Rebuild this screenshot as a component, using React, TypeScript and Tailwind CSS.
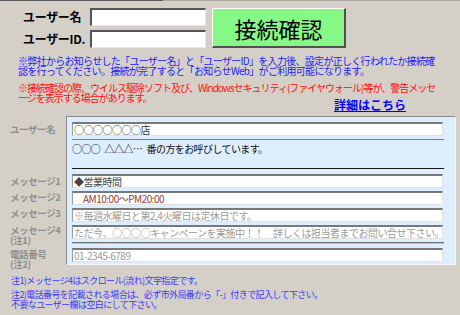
import React from 'react'

const FONT = "font-['Noto_Sans_CJK_JP','Liberation_Sans',sans-serif]"

function Field({ children, className = '' }: { children?: React.ReactNode; className?: string }) {
  return (
    <div
      className={`h-[14px] w-[371px] bg-white border-t-2 border-l border-r border-b border-t-[#787878] border-l-[#9c9c9c] border-r-[#e2e2e2] border-b-[#e2e2e2] pl-[1px] text-[10px] leading-[11px] tracking-[-0.5px] whitespace-nowrap overflow-hidden ${className}`}
    >
      {children}
    </div>
  )
}

function Row({
  label,
  labelPt,
  h,
  children,
  first,
  last,
}: {
  label?: React.ReactNode
  labelPt: string
  h: string
  children: React.ReactNode
  first?: boolean
  last?: boolean
}) {
  return (
    <div className={`flex ${h}`}>
      <div className={`w-[66px] pl-[10px] ${labelPt} text-[9.5px] leading-[10px] tracking-[-0.4px] font-bold text-[#8e8e8e] whitespace-nowrap`}>
        {label}
      </div>
      <div
        className={`w-[390px] bg-[#ddeeff] border-l border-l-[#8a8a8a] border-r border-r-[#f4f4f4] pl-[5px] ${
          first ? 'border-t border-t-[#8a8a8a]' : ''
        } ${last ? 'border-b border-b-[#f4f4f4]' : ''}`}
      >
        {children}
      </div>
    </div>
  )
}

export default function App() {
  return (
    <div className={`w-[460px] h-[315px] overflow-hidden bg-[#d4d0c8] ${FONT}`}>
      {/* top edge */}
      <div className="flex h-px">
        <div className="w-[163px] bg-[#5a5a5a]" />
        <div className="flex-1 bg-[#aeaaa2]" />
      </div>

      {/* login */}
      <div className="flex pt-[7px]">
        <div className="flex flex-col gap-[4px]">
          <div className="flex items-center h-[18px]">
            <span className="w-[90px] pl-[23px] text-[12px] font-bold tracking-[-0.3px] text-black">ユーザー名</span>
            <div className="w-[116px] h-[18px] bg-white border-t-2 border-l-2 border-r border-b border-t-[#555] border-l-[#555] border-r-[#e8e8e8] border-b-[#e8e8e8]" />
          </div>
          <div className="flex items-center h-[18px]">
            <span className="w-[90px] pl-[23px] text-[12px] font-bold tracking-[-0.3px] text-black">ユーザーID.</span>
            <div className="w-[116px] h-[18px] bg-white border-t-2 border-l-2 border-r border-b border-t-[#555] border-l-[#555] border-r-[#e8e8e8] border-b-[#e8e8e8]" />
          </div>
        </div>
        <button className="ml-[6px] w-[134px] h-[40px] bg-[#86f886] border-t border-l border-t-white border-l-white border-r-2 border-b-2 border-r-[#505050] border-b-[#505050] text-[22px] leading-none text-black">
          接続確認
        </button>
      </div>

      {/* notices */}
      <div className="mt-[8px] pl-[18px] text-[10px] leading-[10px] tracking-[-0.7px] text-[#1c1cff] whitespace-nowrap">
        <p>※弊社からお知らせした「ユーザー名」と「ユーザーID」を入力後、設定が正しく行われたか接続確</p>
        <p>認を行ってください。接続が完了すると「お知らせWeb」がご利用可能になります。</p>
      </div>
      <div className="mt-[7px] pl-[18px] text-[10px] leading-[10px] tracking-[-1px] text-[#ff1010] whitespace-nowrap">
        <p>※接続確認の際、ウイルス駆除ソフト及び、Windowsセキュリティ(ファイヤウォール)等が、警告メッセ</p>
        <p>ージを表示する場合があります。</p>
      </div>
      <div className="-mt-[5px] flex justify-end pr-[54px]">
        <a className="text-[12px] leading-[14px] font-bold text-[#0000ff] underline">詳細はこちら</a>
      </div>

      {/* settings panel */}
      <div className="mt-[4px] flex flex-col">
        <Row label="ユーザー名" labelPt="pt-[8px]" h="h-[21px]" first>
          <div className="pt-[5px]">
            <Field className="text-[#333]">○○○○○○○店</Field>
          </div>
        </Row>
        <Row labelPt="" h="h-[34px]">
          <div className="pt-[2px] pr-[11px]">
            <div className="h-px bg-[#7c7c7c]" />
            <p className="mt-[3px] text-[10px] leading-[11px] tracking-[-0.6px] text-[#111] whitespace-pre">
              {'○○○\u2002△△△…\u2002番の方をお呼びしています。'}
            </p>
            <div className="mt-[14px] h-px bg-[#1a1a1a]" />
          </div>
        </Row>
        <Row label="メッセージ1" labelPt="pt-[5px]" h="h-[18px]">
          <div className="pt-[3px]">
            <Field className="text-[#444]">◆営業時間</Field>
          </div>
        </Row>
        <Row label="メッセージ2" labelPt="pt-[3px]" h="h-[17px]">
          <div className="pt-[2px]">
            <Field className="text-[#9a3a3a] pl-[10px]">AM10:00～PM20:00</Field>
          </div>
        </Row>
        <Row label="メッセージ3" labelPt="pt-[2px]" h="h-[17px]">
          <div className="pt-[2px]">
            <Field className="text-[#9a9a9a]">※毎週水曜日と第2,4火曜日は定休日です。</Field>
          </div>
        </Row>
        <Row
          label={
            <>
              メッセージ4
              <br />
              (注1)
            </>
          }
          labelPt="pt-[2px]"
          h="h-[21px]"
        >
          <div className="pt-[2px] pr-[11px]">
            <Field className="text-[#9a9a9a]">ただ今、○○○○キャンペーンを実施中！！　詳しくは担当者までお問い合せ下さい。</Field>
            <div className="mt-[3px] h-px bg-[#707070]" />
            <div className="h-px bg-[#c4c4c4]" />
          </div>
        </Row>
        <Row
          label={
            <>
              電話番号
              <br />
              (注2)
            </>
          }
          labelPt="pt-[5px]"
          h="h-[21px]"
          last
        >
          <div className="pt-[4px]">
            <Field className="text-[#9a9a9a]">01-2345-6789</Field>
          </div>
        </Row>
      </div>

      {/* footnotes */}
      <div className="mt-[11px] pl-[11px] text-[9px] leading-[10px] tracking-[-0.6px] text-[#3a3aff] whitespace-nowrap">
        <p>注1)メッセージ4はスクロール(流れ)文字指定です。</p>
        <p className="mt-[4px]">注2)電話番号を記載される場合は、必ず市外局番から「-」付きで記入して下さい。</p>
        <p>不要なユーザー欄は空白にして下さい。</p>
      </div>
    </div>
  )
}
